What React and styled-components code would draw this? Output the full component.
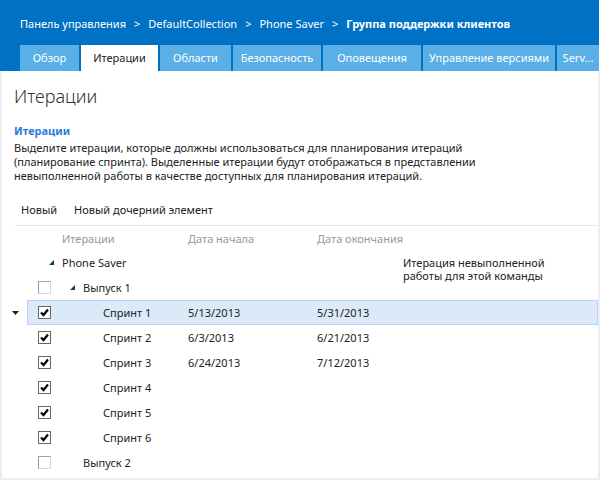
import React from 'react';
import styled, { createGlobalStyle } from 'styled-components';

const GlobalStyle = createGlobalStyle`
  body {
    margin: 0;
    background: #ffffff;
    font-family: "Segoe UI", "Noto Sans", "Open Sans", sans-serif;
    font-size: 11px;
    color: #222222;
  }
`;

const crumbs = ['Панель управления', 'DefaultCollection', 'Phone Saver'];

const tabs = [
  { label: 'Обзор', width: 59 },
  { label: 'Итерации', width: 77, active: true },
  { label: 'Области', width: 71 },
  { label: 'Безопасность', width: 88 },
  { label: 'Оповещения', width: 98 },
  { label: 'Управление версиями', width: 132 },
  { label: 'Serv...', width: 42 },
];

const description = [
  'Выделите итерации, которые должны использоваться для планирования итераций',
  '(планирование спринта). Выделенные итерации будут отображаться в представлении',
  'невыполненной работы в качестве доступных для планирования итераций.',
];

const rows = [
  { name: 'Phone Saver', level: 0, expanded: true, noCheck: true, backlog: true },
  { name: 'Выпуск 1', level: 1, expanded: true, checked: false },
  { name: 'Спринт 1', level: 2, checked: true, start: '5/13/2013', end: '5/31/2013', selected: true },
  { name: 'Спринт 2', level: 2, checked: true, start: '6/3/2013', end: '6/21/2013' },
  { name: 'Спринт 3', level: 2, checked: true, start: '6/24/2013', end: '7/12/2013' },
  { name: 'Спринт 4', level: 2, checked: true },
  { name: 'Спринт 5', level: 2, checked: true },
  { name: 'Спринт 6', level: 2, checked: true },
  { name: 'Выпуск 2', level: 1, checked: false },
];

export default function App() {
  return (
    <Page>
      <GlobalStyle />
      <Header>
        <Breadcrumbs>
          {crumbs.map(c => (
            <React.Fragment key={c}>
              <Crumb>{c}</Crumb>
              <Crumb>&gt;</Crumb>
            </React.Fragment>
          ))}
          <Crumb current>Группа поддержки клиентов</Crumb>
        </Breadcrumbs>
        <Tabs>
          {tabs.map(t => (
            <Tab key={t.label} width={t.width} active={t.active}>{t.label}</Tab>
          ))}
        </Tabs>
      </Header>
      <Content>
        <Title>Итерации</Title>
        <Subtitle>Итерации</Subtitle>
        <Description>
          {description.map(line => <Line key={line}>{line}</Line>)}
        </Description>
        <Toolbar>
          <ToolButton>Новый</ToolButton>
          <ToolButton>Новый дочерний элемент</ToolButton>
        </Toolbar>
        <Grid>
          <HeaderRow>
            <Marker />
            <RowBody>
              <HeaderCell first>Итерации</HeaderCell>
              <HeaderCell>Дата начала</HeaderCell>
              <HeaderCell>Дата окончания</HeaderCell>
              <HeaderCell />
            </RowBody>
          </HeaderRow>
          {rows.map(r => (
            <Row key={r.name}>
              <Marker>
                {r.selected && (
                  <svg width="7" height="4" viewBox="0 0 7 4">
                    <polygon points="0,0 7,0 3.5,4" fill="#222" />
                  </svg>
                )}
              </Marker>
              <RowBody selected={r.selected}>
                <NameCell>
                  <CheckSlot>
                    {!r.noCheck && (
                      <Checkbox checked={r.checked}>
                        {r.checked && (
                          <svg width="11" height="11" viewBox="0 0 11 11">
                            <polyline points="2,5.5 4.5,8 9,2.5" fill="none" stroke="#000" strokeWidth="2.2" />
                          </svg>
                        )}
                      </Checkbox>
                    )}
                  </CheckSlot>
                  <TreeNode level={r.level}>
                    <Toggle>
                      {r.expanded && (
                        <svg width="5" height="5" viewBox="0 0 5 5">
                          <polygon points="5,0 5,5 0,5" fill="#333" />
                        </svg>
                      )}
                    </Toggle>
                    {r.name}
                  </TreeNode>
                </NameCell>
                <Cell>{r.start}</Cell>
                <Cell>{r.end}</Cell>
                {r.backlog ? (
                  <BacklogLabel>
                    <Line>Итерация невыполненной</Line>
                    <Line>работы для этой команды</Line>
                  </BacklogLabel>
                ) : <Cell />}
              </RowBody>
            </Row>
          ))}
        </Grid>
      </Content>
    </Page>
  );
}

const Page = styled.div`
  width: 600px;
  height: 480px;
  display: flex;
  flex-direction: column;
  overflow: hidden;
`;

const Header = styled.div`
  flex: 0 0 auto;
  background: #0072c6;
  padding: 16px 0 0 20px;
  width: 599px;
  box-sizing: border-box;
  overflow: hidden;
`;

const Breadcrumbs = styled.div`
  display: flex;
  gap: 8px;
  line-height: 16px;
  color: #ffffff;
  white-space: nowrap;
`;

const Crumb = styled.span`
  font-weight: ${p => (p.current ? 700 : 400)};
`;

const Tabs = styled.div`
  display: flex;
  gap: 2px;
  margin-top: 13px;
  white-space: nowrap;
`;

const Tab = styled.div`
  flex: 0 0 ${p => p.width}px;
  height: 26px;
  line-height: 26px;
  text-align: center;
  overflow: hidden;
  background: ${p => (p.active ? '#ffffff' : '#5aafe6')};
  color: ${p => (p.active ? '#222222' : '#ffffff')};
`;

const Content = styled.div`
  flex: 1;
  min-height: 0;
  border: 2px solid #eeeeee;
  border-top: none;
  display: flex;
  flex-direction: column;
`;

const Title = styled.h1`
  margin: 12px 0 0 12px;
  font-size: 18px;
  font-weight: 300;
  line-height: 26px;
  color: #333333;
`;

const Subtitle = styled.h2`
  margin: 14px 0 0 12px;
  font-size: 11px;
  font-weight: 700;
  line-height: 16px;
  color: #2b7bd9;
`;

const Description = styled.div`
  margin: 2px 0 0 12px;
  line-height: 14px;
`;

const Line = styled.div`
  white-space: nowrap;
`;

const Toolbar = styled.div`
  display: flex;
  gap: 17px;
  margin: 0 0 0 13px;
  padding: 18px 0 6px 6px;
  line-height: 18px;
  border-bottom: 1px solid #e6e6e6;
`;

const ToolButton = styled.span`
  color: #222222;
`;

const Grid = styled.div`
  display: flex;
  flex-direction: column;
`;

const Row = styled.div`
  display: flex;
  height: 25px;
`;

const HeaderRow = styled(Row)`
  height: 24px;
  color: #999999;
`;

const Marker = styled.div`
  flex: 0 0 25px;
  display: flex;
  align-items: center;
  justify-content: center;
  padding-left: 1px;
`;

const RowBody = styled.div`
  flex: 1;
  display: grid;
  grid-template-columns: 160px 129px 86px 1fr;
  grid-template-rows: minmax(0, 1fr);
  align-items: center;
  box-sizing: border-box;
  margin-left: -1px;
  background: ${p => (p.selected ? '#dce9f9' : 'transparent')};
  border: 1px solid ${p => (p.selected ? '#b4d3f5' : 'transparent')};
`;

const HeaderCell = styled.div`
  padding-left: ${p => (p.first ? '34px' : '0')};
  white-space: nowrap;
`;

const NameCell = styled.div`
  display: flex;
  align-items: center;
  padding-left: 10px;
`;

const CheckSlot = styled.div`
  flex: 0 0 12px;
  height: 13px;
`;

const Checkbox = styled.div`
  width: 13px;
  height: 13px;
  box-sizing: border-box;
  background: #ffffff;
  border: 1px solid;
  border-color: ${p => (p.checked ? '#666666' : '#a0a0a8 #d8d8dc #d8d8dc #8c9ad6')};
  display: flex;
  align-items: center;
  justify-content: center;
`;

const TreeNode = styled.div`
  display: flex;
  align-items: center;
  padding-left: ${p => p.level * 20}px;
  white-space: nowrap;
`;

const Toggle = styled.span`
  flex: 0 0 12px;
  display: flex;
  align-items: center;
  margin-left: -1px;
  margin-right: 1px;
  padding-bottom: 1px;
`;

const Cell = styled.div`
  white-space: nowrap;
`;

const BacklogLabel = styled.div`
  align-self: start;
  padding-top: 5px;
  line-height: 13px;
`;
